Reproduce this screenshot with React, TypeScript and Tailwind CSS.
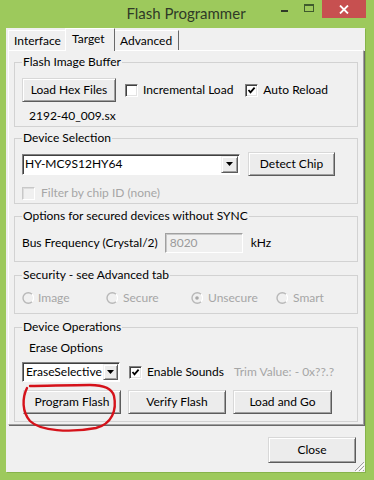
import React from "react";

const btn =
  "flex items-center justify-center bg-[#ececec] border border-t-[#d8d8d8] border-l-[#d8d8d8] border-r-[#5c5c5c] border-b-[#5c5c5c] shadow-[inset_1px_1px_0_#ffffff,inset_-1px_-1px_0_#a0a0a0] text-black";

function Check({ checked, disabled }: { checked?: boolean; disabled?: boolean }) {
  return (
    <span
      className={
        disabled
          ? "w-[13px] h-[13px] shrink-0 bg-[#f0f0f0] border border-t-[#c8c8c8] border-l-[#c8c8c8] border-r-white border-b-white shadow-[inset_1px_1px_0_#dcdcdc]"
          : "w-[13px] h-[13px] shrink-0 bg-white border border-t-[#808080] border-l-[#808080] border-r-white border-b-white shadow-[inset_1px_1px_0_#404040,inset_-1px_-1px_0_#e3e3e3] flex items-center justify-center"
      }
    >
      {checked && (
        <svg width="9" height="9" viewBox="0 0 9 9">
          <path d="M1.5 4 L3.5 6.3 L7.6 1.6" stroke="#000" strokeWidth="1.8" fill="none" />
        </svg>
      )}
    </span>
  );
}

function Radio({ checked }: { checked?: boolean }) {
  return (
    <svg width="12" height="12" viewBox="0 0 12 12" className="shrink-0">
      <path d="M10 2.2 A5.3 5.3 0 1 0 10 9.8" stroke="#b8b8b8" strokeWidth="1.4" fill="none" />
      <path d="M10 2.2 A5.3 5.3 0 0 1 10 9.8" stroke="#ffffff" strokeWidth="1.2" fill="none" />
      {checked && <circle cx="6" cy="6" r="1.8" fill="#a8a8a8" />}
    </svg>
  );
}

function DropArrow({ w }: { w: string }) {
  return (
    <span className={`${w} h-full ${btn} border-t-[#f0f0f0] border-l-[#f0f0f0]`}>
      <svg width="7" height="4" viewBox="0 0 7 4">
        <path d="M0 0 H7 L3.5 4 Z" fill="#000" />
      </svg>
    </span>
  );
}

function Group({ label, className, children }: { label: string; className: string; children: React.ReactNode }) {
  return (
    <fieldset className={`border border-[#d2d2d2] px-[7px] ${className}`}>
      <legend className="px-[1px] leading-[16px] ml-0">{label}</legend>
      {children}
    </fieldset>
  );
}

export default function App() {
  return (
    <div className="w-[374px] h-[480px] bg-[#9dc95c] relative overflow-hidden font-['Lato',sans-serif] text-[12px] text-black">
      {/* title bar */}
      <div className="relative h-[28px]">
        <div className="text-center text-[15px] leading-[26px] text-[#2f3a27] pr-[2px]">Flash Programmer</div>
        <div className="absolute right-[8px] top-0 flex items-start">
          <span className="mt-[10px] w-[7px] h-[2px] bg-[#2f3a27] mr-[16px]" />
          <span className="mt-[4px] w-[10px] h-[8px] border border-[#3f5a2d] border-t-2 mr-[8px]" />
          <span className="w-[44px] h-[18px] bg-[#c75050] flex items-center justify-center">
            <svg width="10" height="9" viewBox="0 0 10 9">
              <path d="M1 0.5 L9 8.5 M9 0.5 L1 8.5" stroke="#fff" strokeWidth="1.8" />
            </svg>
          </span>
        </div>
      </div>

      {/* client */}
      <div className="ml-[6px] w-[359px] h-[444px] bg-[#f0f0f0] flex flex-col relative shadow-[1px_1px_0_#86b34a]">
        {/* tabs */}
        <div className="flex items-end h-[22px] pl-[2px]">
          <div className="w-[57px] h-[20px] border-t border-l border-white pl-[5px] leading-[20px]">Interface</div>
          <div className="w-[50px] h-[23px] -mb-[1px] z-10 bg-[#f0f0f0] border-t border-l border-white border-r border-r-[#696969] pl-[6px] leading-[20px]">
            Target
          </div>
          <div className="w-[64px] h-[20px] border-t border-white border-r border-r-[#696969] pl-[5px] leading-[20px]">
            Advanced
          </div>
        </div>

        {/* panel */}
        <div className="ml-[2px] w-[356px] h-[375px] border border-t-white border-l-white border-r-[#a0a0a0] border-b-[#a0a0a0] shadow-[1px_1px_0_#696969] px-[5px] flex flex-col">
          <Group label="Flash Image Buffer" className="mt-[3px] pb-[2px]">
            <div className="flex items-center mt-[8px]">
              <button className={`w-[94px] h-[24px] ${btn}`}>Load Hex Files</button>
              <span className="ml-[9px]"><Check /></span>
              <span className="ml-[5px]">Incremental Load</span>
              <span className="ml-[12px]"><Check checked /></span>
              <span className="ml-[5px]">Auto Reload</span>
            </div>
            <div className="mt-[6px] pl-[7px] leading-[16px]">2192-40_009.sx</div>
          </Group>

          <Group label="Device Selection" className="mt-[3px] pb-[2px]">
            <div className="flex items-center mt-[6px] h-[24px]">
              <div className="w-[218px] h-[21px] bg-white flex items-center border border-t-[#808080] border-l-[#808080] border-r-white border-b-white shadow-[inset_1px_1px_0_#404040] pr-[1px] py-[1px]">
                <span className="flex-1 pl-[2px]">HY-MC9S12HY64</span>
                <DropArrow w="w-[17px]" />
              </div>
              <button className={`ml-[8px] w-[87px] h-[24px] ${btn}`}>Detect Chip</button>
            </div>
            <div className="flex items-center mt-[9px] leading-[16px]">
              <Check disabled />
              <span className="ml-[6px] text-[#a6a6a6]">Filter by chip ID (none)</span>
            </div>
          </Group>

          <Group label="Options for secured devices without SYNC" className="mt-[4px] pb-[8px]">
            <div className="flex items-center mt-[9px] h-[20px]">
              <span>Bus Frequency (Crystal/2)</span>
              <span className="ml-[7px] w-[78px] h-[20px] bg-[#f0f0f0] border border-t-[#a0a0a0] border-l-[#a0a0a0] border-r-white border-b-white shadow-[inset_1px_1px_0_#c8c8c8] pl-[4px] leading-[17px] text-[#9a9a9a]">
                8020
              </span>
              <span className="ml-[8px]">kHz</span>
            </div>
          </Group>

          <Group label="Security - see Advanced tab" className="mt-[5px] pb-[7px]">
            <div className="flex items-center mt-[7px] h-[16px] text-[#a6a6a6]">
              <span className="w-[84px] flex items-center gap-[4px]"><Radio />Image</span>
              <span className="w-[85px] flex items-center gap-[5px]"><Radio />Secure</span>
              <span className="w-[85px] flex items-center gap-[5px]"><Radio checked />Unsecure</span>
              <span className="flex items-center gap-[5px]"><Radio />Smart</span>
            </div>
          </Group>

          <Group label="Device Operations" className="mt-[5px] pb-[7px]">
            <div className="mt-[5px] pl-[7px] leading-[16px]">Erase Options</div>
            <div className="flex items-center mt-[6px] h-[20px]">
              <div className="w-[98px] h-[20px] bg-white flex items-center border border-t-[#808080] border-l-[#808080] border-r-white border-b-white shadow-[inset_1px_1px_0_#404040] pr-[1px] py-[1px]">
                <span className="flex-1 pl-[3px]">EraseSelective</span>
                <DropArrow w="w-[15px]" />
              </div>
              <span className="ml-[9px]"><Check checked /></span>
              <span className="ml-[5px]">Enable Sounds</span>
              <span className="ml-[10px] text-[#a6a6a6]">Trim Value: - 0x??.?</span>
            </div>
            <div className="flex mt-[8px] gap-[7px] pl-[1px]">
              <button className={`w-[98px] h-[24px] ${btn}`}>Program Flash</button>
              <button className={`w-[98px] h-[24px] ${btn}`}>Verify Flash</button>
              <button className={`w-[99px] h-[24px] ${btn}`}>Load and Go</button>
            </div>
          </Group>
        </div>

        <div className="flex justify-end mt-[12px] pr-[9px]">
          <button className={`w-[88px] h-[26px] ${btn}`}>Close</button>
        </div>

        {/* size grip */}
        <svg width="11" height="11" viewBox="0 0 11 11" className="absolute right-0 bottom-0">
          <path d="M10 1 L1 10 M10 5 L5 10 M10 9 L9 10" stroke="#a0a0a0" strokeWidth="1" />
          <path d="M11 2 L2 11 M11 6 L6 11" stroke="#ffffff" strokeWidth="1" />
        </svg>
      </div>

      {/* hand-drawn red circle */}
      <svg width="374" height="480" viewBox="0 0 374 480" className="absolute inset-0 pointer-events-none">
        <path
          d="M27 388 C22 398 22 412 30 421 C40 431 70 433 96 428 C112 424 117 410 114 396 C112 388 104 385 90 385 C70 385 45 386 30 386"
          stroke="#d5121a"
          strokeWidth="2.4"
          fill="none"
          strokeLinecap="round"
        />
      </svg>
    </div>
  );
}
